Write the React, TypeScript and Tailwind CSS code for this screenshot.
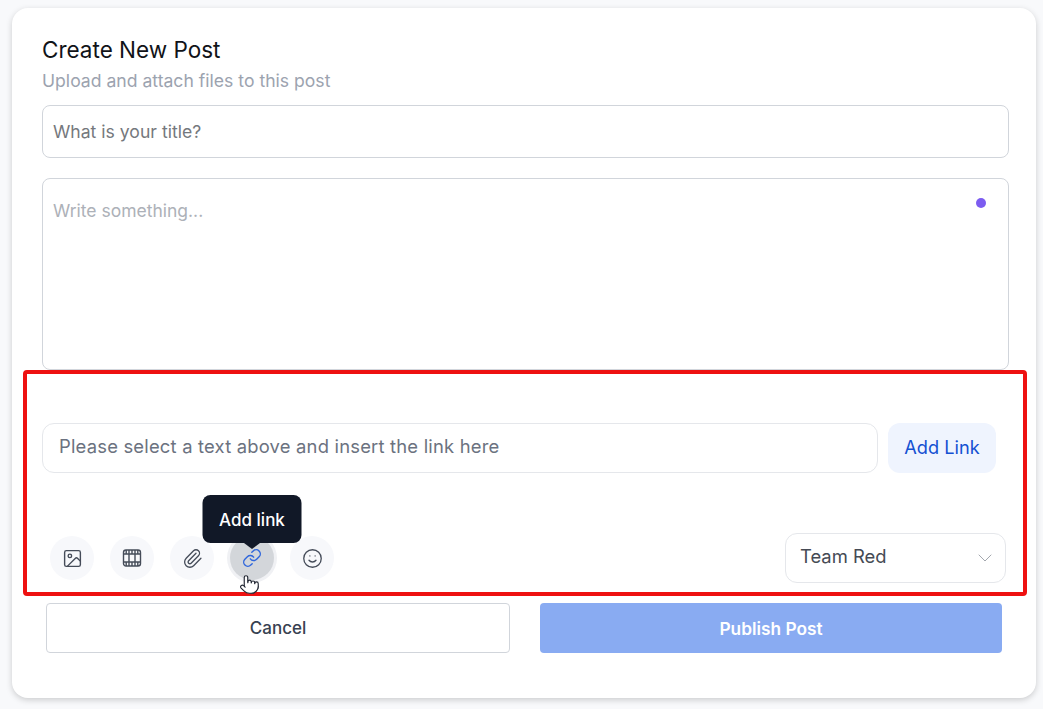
import { ChevronDown, Image, Link, Paperclip, Pointer, Smile } from 'lucide-react';

const FilmIcon = () => (
  <svg width="20" height="20" viewBox="0 0 20 20" fill="none" stroke="currentColor" strokeWidth="1.4" strokeLinejoin="round">
    <rect x="1.5" y="2" width="17" height="16" rx="2.5" />
    <path d="M1.5 6h17M1.5 14h17M7 2v16M13 2v16M4.2 2v4M15.8 2v4M4.2 14v4M15.8 14v4M10 2v4M10 14v4" />
  </svg>
);

const tools = [
  { label: 'image', icon: <Image size={21} strokeWidth={1.6} /> },
  { label: 'video', icon: <FilmIcon /> },
  { label: 'file', icon: <Paperclip size={21} strokeWidth={1.5} /> },
  { label: 'link', icon: <Link size={20} strokeWidth={1.7} />, active: true },
  { label: 'emoji', icon: <Smile size={21} strokeWidth={1.5} /> },
];

export default function App() {
  return (
    <div className="h-[709px] w-[1043px] overflow-hidden bg-[#f8f9fb] px-3 pt-2 font-['Inter',sans-serif]">
      <div className="h-[690px] w-[1024px] rounded-2xl bg-white pt-[28px] pr-[27px] pl-[30px] shadow-[0_2px_6px_rgba(0,0,0,0.18)]">
        <h1 className="text-[22.5px] leading-7 text-[#111318]">Create New Post</h1>
        <p className="mt-[5px] text-[17.6px] leading-6 text-[#9ca3af]">Upload and attach files to this post</p>

        <div className="mt-3 flex h-[53px] items-center rounded-lg border border-[#d1d5db] px-[10px] pt-[2px] text-[17.6px] text-[#75787d]">
          What is your title?
        </div>

        <div className="relative mt-5 h-[192px] rounded-lg border border-[#d1d5db] px-[10px] pt-[20px] text-[17.5px] leading-6 text-[#adb1b8]">
          Write something...
          <span className="absolute top-[19px] right-[22px] h-[10px] w-[10px] rounded-full bg-[#7c5cf0]" />
        </div>

        <div className="mr-[-18px] ml-[-19px] h-[226px] rounded border-4 border-[#ee1111] pt-[49px] pr-[17px] pl-[15px]">
          <div className="flex gap-[10px] pr-[10px]">
            <div className="flex h-[50px] flex-1 items-center rounded-xl border border-[#e5e7eb] px-[16px] pb-[2px] text-[18.4px] tracking-[0.2px] text-[#6b7280]">
              Please select a text above and insert the link here
            </div>
            <button className="h-[50px] w-[108px] rounded-xl bg-[#eff4fe] text-[18.2px] text-[#1450d2]">
              Add Link
            </button>
          </div>

          <div className="mt-[60px] flex items-start justify-between">
            <div className="mt-[3px] flex gap-4 pl-[8px]">
              {tools.map((tool) => (
                <div
                  key={tool.label}
                  className={
                    tool.active
                      ? 'relative flex h-11 w-11 items-center justify-center rounded-full bg-[#d3d6da] text-[#2f66dc] ring-[3px] ring-[#f0f1f4]'
                      : 'flex h-11 w-11 items-center justify-center rounded-full bg-[#f7f8fb] text-[#454c59]'
                  }
                >
                  {tool.icon}
                  {tool.active && (
                    <>
                      <div className="absolute bottom-[37px] left-1/2 flex h-12 w-[99px] -translate-x-1/2 items-center justify-center rounded-lg bg-[#111827] pt-1 text-[17px] font-medium text-white">
                        Add link
                      </div>
                      <div className="absolute bottom-[31px] left-1/2 h-0 w-0 -translate-x-1/2 border-x-[8px] border-t-[6px] border-x-transparent border-t-[#111827]" />
                      <Pointer size={21} strokeWidth={1.3} className="absolute top-[38px] left-[9px] fill-white text-[#1f2430]" />
                    </>
                  )}
                </div>
              ))}
            </div>
            <div className="flex h-[50px] w-[221px] items-center justify-between rounded-xl border border-[#e5e7eb] pr-[8px] pl-[14px] text-[18.4px] text-[#454a54]">
              <span className="pb-[2px]">Team Red</span>
              <ChevronDown size={24} strokeWidth={1} className="text-[#a3a7ae]" />
            </div>
          </div>
        </div>

        <div className="mt-[7px] flex gap-[30px] pr-[7px] pl-1">
          <button className="h-[50px] flex-1 rounded border border-[#d1d5db] pt-[2px] text-[17px] font-medium text-[#374151]">
            Cancel
          </button>
          <button className="h-[50px] flex-1 rounded bg-[#89abf2] pt-[2px] text-[17.3px] font-semibold text-white">
            Publish Post
          </button>
        </div>
      </div>
    </div>
  );
}
